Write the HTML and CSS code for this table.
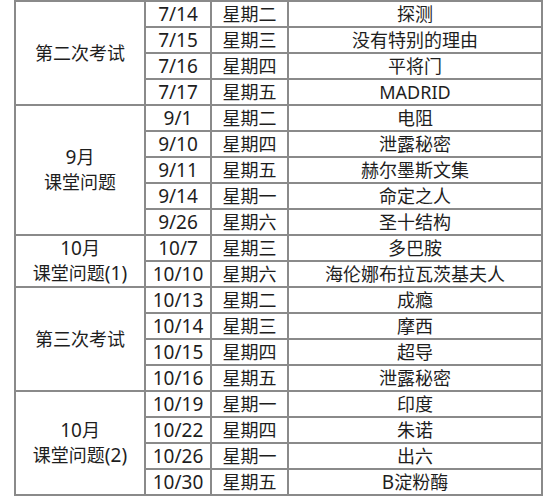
FILE: index.html
```html
<!DOCTYPE html>
<html lang="zh">
<head>
<meta charset="utf-8">
<link rel="stylesheet" href="styles.css">
</head>
<body>
<table class="sched">
<colgroup>
<col class="c1"><col class="c2"><col class="c3"><col class="c4">
</colgroup>
<tbody>
<tr><td class="grp" rowspan="4">第二次考试</td><td class="d">7/14</td><td>星期二</td><td>探测</td></tr>
<tr><td class="d">7/15</td><td>星期三</td><td>没有特别的理由</td></tr>
<tr><td class="d">7/16</td><td>星期四</td><td>平将门</td></tr>
<tr><td class="d">7/17</td><td>星期五</td><td class="lat">MADRID</td></tr>
<tr><td class="grp" rowspan="5"><span class="n">9</span>月<br>课堂问题</td><td class="d">9/1</td><td>星期二</td><td>电阻</td></tr>
<tr><td class="d">9/10</td><td>星期四</td><td>泄露秘密</td></tr>
<tr><td class="d">9/11</td><td>星期五</td><td>赫尔墨斯文集</td></tr>
<tr><td class="d">9/14</td><td>星期一</td><td>命定之人</td></tr>
<tr><td class="d">9/26</td><td>星期六</td><td>圣十结构</td></tr>
<tr><td class="grp" rowspan="2"><span class="n">10</span>月<br>课堂问题<span class="n">(1)</span></td><td class="d">10/7</td><td>星期三</td><td>多巴胺</td></tr>
<tr><td class="d">10/10</td><td>星期六</td><td>海伦娜布拉瓦茨基夫人</td></tr>
<tr><td class="grp" rowspan="4">第三次考试</td><td class="d">10/13</td><td>星期二</td><td>成瘾</td></tr>
<tr><td class="d">10/14</td><td>星期三</td><td>摩西</td></tr>
<tr><td class="d">10/15</td><td>星期四</td><td>超导</td></tr>
<tr><td class="d">10/16</td><td>星期五</td><td>泄露秘密</td></tr>
<tr><td class="grp" rowspan="4"><span class="n">10</span>月<br>课堂问题<span class="n">(2)</span></td><td class="d">10/19</td><td>星期一</td><td>印度</td></tr>
<tr><td class="d">10/22</td><td>星期四</td><td>朱诺</td></tr>
<tr><td class="d">10/26</td><td>星期一</td><td>出六</td></tr>
<tr><td class="d">10/30</td><td>星期五</td><td><span class="lat">B</span>淀粉酶</td></tr>
</tbody>
</table>
</body>
</html>
```

FILE: styles.css
```css
html, body {
  margin: 0;
  padding: 0;
  background: #ffffff;
}
body {
  padding-left: 14px;
  font-family: "Noto Sans", "Noto Sans CJK SC", sans-serif;
  color: #1e1e1e;
}
.sched {
  border-collapse: collapse;
  table-layout: fixed;
  width: 527px;
}
.c1 { width: 130px; }
.c2 { width: 66px; }
.c3 { width: 77px; }
.c4 { width: 254px; }
.sched td {
  border: 2px solid #8a8a8a;
  height: 24px;
  padding: 0;
  text-align: center;
  vertical-align: middle;
  font-size: 18px;
  line-height: 22px;
  white-space: nowrap;
}
.sched td.grp {
  line-height: 25px;
}
.sched td.d {
  font-size: 19px;
}
.lat {
  font-size: 19px;
}
.n {
  font-size: 19px;
}
```
